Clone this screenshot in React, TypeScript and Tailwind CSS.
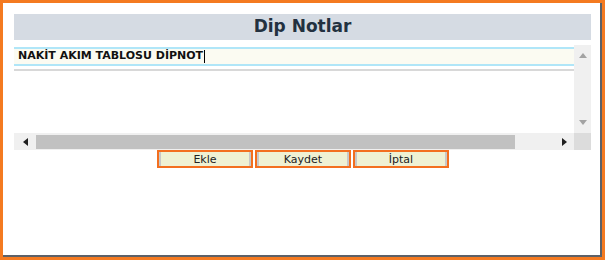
const buttons = ['Ekle', 'Kaydet', 'İptal']

function Tri({ dir, className }: { dir: 'up' | 'down' | 'left' | 'right'; className: string }) {
  const pts = {
    up: '0,5 4,0 8,5',
    down: '0,0 8,0 4,5',
    left: '5,0 5,8 0,4',
    right: '0,0 0,8 5,4',
  }[dir]
  const w = dir === 'up' || dir === 'down' ? 8 : 5
  const h = dir === 'up' || dir === 'down' ? 5 : 8
  return (
    <svg width={w} height={h} viewBox={`0 0 ${w} ${h}`} className={className}>
      <polygon points={pts} fill="currentColor" />
    </svg>
  )
}

export default function App() {
  return (
    <div className="h-[260px] w-[605px] border-[3px] border-[#f47a20] bg-white font-['DejaVu_Sans',sans-serif]">
      <div className="flex h-full flex-col border-r-2 border-b-2 border-[#5c6168] pt-[11px] pr-[8px] pl-[11px]">
        {/* Header */}
        <div className="flex h-[26px] w-[577px] items-center justify-center bg-[#d5dbe3] text-[17px] font-bold text-[#233140]">
          Dip Notlar
        </div>

        {/* Text area with scrollbars */}
        <div className="mt-[5px] flex w-[577px] flex-col">
          <div className="flex h-[88px]">
            <div className="flex-1 bg-white pt-[2px]">
              <div className="flex h-[19px] items-center border-y-2 border-[#b0e6f8] bg-[#fbfbf2] pl-[4px] text-[11px] font-bold text-[#111]">
                NAKİT AKIM TABLOSU DİPNOT
                <span className="ml-[1px] h-[13px] w-px bg-black" />
              </div>
              <div className="mt-[3px] h-[2px] bg-[#d8d8d8]" />
            </div>
            <div className="flex w-[17px] flex-col items-center justify-between bg-[#f0f0f0] py-[8px]">
              <Tri dir="up" className="text-[#a3a3a3]" />
              <Tri dir="down" className="text-[#a3a3a3]" />
            </div>
          </div>
          <div className="flex h-[17px]">
            <div className="flex flex-1 items-center bg-[#f0f0f0]">
              <div className="flex w-[22px] justify-center">
                <Tri dir="left" className="text-[#202020]" />
              </div>
              <div className="h-[14px] w-[479px] bg-[#c1c1c1]" />
              <div className="flex flex-1 justify-end pr-[7px]">
                <Tri dir="right" className="text-[#202020]" />
              </div>
            </div>
            <div className="w-[17px] bg-[#dcdcdc]" />
          </div>
        </div>

        {/* Buttons */}
        <div className="flex pl-[143px]">
          {buttons.map((b) => (
            <button
              key={b}
              className="mr-[2px] h-[18px] w-[96px] border-2 border-[#f36f1f] bg-[#eff1d3] text-[11px] leading-none text-[#222] shadow-[inset_-2px_0_0_#c8c8c8,inset_2px_0_0_#c8c8c8]"
            >
              {b}
            </button>
          ))}
        </div>
      </div>
    </div>
  )
}
